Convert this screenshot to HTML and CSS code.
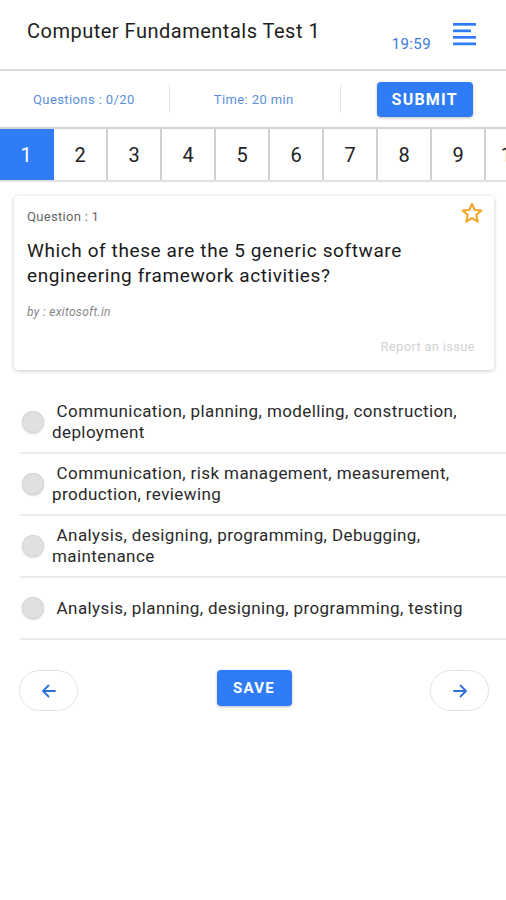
FILE: index.html
```html
<!DOCTYPE html>
<html lang="en">
<head>
    <meta charset="UTF-8">
    <meta name="viewport" content="width=device-width, initial-scale=1.0">
    <title>Computer Fundamentals Test 1</title>
    <link rel="stylesheet" href="styles.css">
</head>
<body>
    <!-- Header -->
    <div class="header">
        <h1>Computer Fundamentals Test 1</h1>
        <span class="clock">19:59</span>
        <svg class="menu" width="24" height="24" viewBox="0 0 24 24">
            <rect x="0" y="0" width="23" height="2.7" fill="#2f7cf6"/>
            <rect x="0" y="6.5" width="18" height="2.7" fill="#2f7cf6"/>
            <rect x="0" y="13" width="23" height="2.7" fill="#2f7cf6"/>
            <rect x="0" y="19.5" width="23" height="2.7" fill="#2f7cf6"/>
        </svg>
    </div>

    <!-- Info bar -->
    <div class="info">
        <span class="info-item">Questions : 0/20</span>
        <span class="sep"></span>
        <span class="info-item">Time: 20 min</span>
        <span class="sep"></span>
        <button class="btn submit">SUBMIT</button>
    </div>

    <!-- Question numbers -->
    <div class="numbers">
        <div class="num active">1</div>
        <div class="num">2</div>
        <div class="num">3</div>
        <div class="num">4</div>
        <div class="num">5</div>
        <div class="num">6</div>
        <div class="num">7</div>
        <div class="num">8</div>
        <div class="num">9</div>
        <div class="num">10</div>
    </div>

    <!-- Question card -->
    <div class="card">
        <svg class="star" width="24" height="24" viewBox="0 0 24 24">
            <path d="M12 2.8l2.7 6.2 6.7.6-5.1 4.4 1.5 6.6L12 17.1l-5.8 3.5 1.5-6.6-5.1-4.4 6.7-.6z" fill="none" stroke="#f5a623" stroke-width="2" stroke-linejoin="round"/>
        </svg>
        <div class="q-label">Question : 1</div>
        <div class="q-text">Which of these are the 5 generic software engineering framework activities?</div>
        <div class="q-by">by : exitosoft.in</div>
        <div class="report">Report an issue</div>
    </div>

    <!-- Options -->
    <div class="options">
        <label class="option"><span class="radio"></span><span class="opt-text">&nbsp;Communication, planning, modelling, construction, deployment</span></label>
        <label class="option"><span class="radio"></span><span class="opt-text">&nbsp;Communication, risk management, measurement, production, reviewing</span></label>
        <label class="option"><span class="radio"></span><span class="opt-text">&nbsp;Analysis, designing, programming, Debugging, maintenance</span></label>
        <label class="option"><span class="radio"></span><span class="opt-text">&nbsp;Analysis, planning, designing, programming, testing</span></label>
    </div>

    <!-- Navigation -->
    <div class="nav">
        <button class="arrow">
            <svg width="20" height="20" viewBox="0 0 20 20"><path d="M16 10H4M9.5 4.5L4 10l5.5 5.5" fill="none" stroke="#2f6fd6" stroke-width="1.8" stroke-linecap="round" stroke-linejoin="round"/></svg>
        </button>
        <button class="btn save">SAVE</button>
        <button class="arrow">
            <svg width="20" height="20" viewBox="0 0 20 20"><path d="M4 10h12M10.5 4.5L16 10l-5.5 5.5" fill="none" stroke="#2f6fd6" stroke-width="1.8" stroke-linecap="round" stroke-linejoin="round"/></svg>
        </button>
    </div>
</body>
</html>
```

FILE: styles.css
```css
body {
    font-family: Roboto, "Noto Sans", Arial, sans-serif;
    background: #fff;
    margin: 0;
    color: #222;
    overflow: hidden;
}
.header {
    height: 69px;
    display: flex;
    align-items: flex-start;
    padding: 0 29px 0 27px;
    border-bottom: 2px solid #dcdcdc;
}
.header h1 {
    font-size: 20px;
    font-weight: 400;
    letter-spacing: 0.5px;
    margin: 19px 0 0;
    flex: 1;
    color: #1e1e1e;
}
.clock {
    color: #3b7ad9;
    font-size: 15px;
    letter-spacing: 0.4px;
    margin-top: 35px;
    margin-right: 22px;
}
.menu {
    margin-top: 23px;
}
.info {
    height: 56px;
    display: flex;
    align-items: center;
    padding: 0 0 0 33px;
    border-bottom: 2px solid #d4d4d4;
}
.info > * {
    flex-shrink: 0;
    white-space: nowrap;
}
.info-item {
    color: #5b8fdc;
    font-size: 13px;
    letter-spacing: 0.4px;
}
.sep {
    width: 1px;
    height: 28px;
    background: #e2e2e2;
    margin: 0 44px 0 34px;
}
.info-item + .sep + .info-item + .sep {
    margin: 0 36px 0 46px;
}
.btn {
    background: #2f7cf6;
    color: white;
    border: none;
    border-radius: 4px;
    font-family: Roboto, Arial, sans-serif;
    font-weight: 700;
    letter-spacing: 1.2px;
    box-shadow: 0 1px 3px rgba(0,0,0,0.25);
    cursor: pointer;
}
.submit {
    width: 96px;
    height: 35px;
    font-size: 16px;
}
.numbers {
    display: flex;
    height: 51px;
    border-bottom: 2px solid #e0e0e0;
}
.num {
    flex: 0 0 52px;
    display: flex;
    align-items: center;
    justify-content: center;
    font-size: 20px;
    color: #222;
    border-right: 2px solid #d0d0d0;
}
.num.active {
    background: #2f7cf6;
    color: white;
    border-right-color: #2f7cf6;
}
.card {
    position: relative;
    margin: 14px 12px 0 14px;
    padding: 13px 13px 16px 13px;
    border-radius: 4px;
    box-shadow: 0 1px 4px rgba(0,0,0,0.22);
}
.star {
    position: absolute;
    top: 5px;
    right: 10px;
}
.q-label {
    font-size: 13px;
    letter-spacing: 0.3px;
    color: #666;
}
.q-text {
    font-size: 19px;
    letter-spacing: 0.6px;
    line-height: 25px;
    margin-top: 14px;
    color: #1a1a1a;
}
.q-by {
    font-size: 12px;
    letter-spacing: 0.3px;
    font-style: italic;
    color: #888;
    margin-top: 17px;
}
.report {
    text-align: right;
    font-size: 13px;
    letter-spacing: 0.3px;
    color: #d2d2d2;
    margin-top: 20px;
    padding-right: 6px;
}
.options {
    margin: 22px 0 0 20px;
}
.option {
    display: flex;
    align-items: center;
    min-height: 62px;
    border-bottom: 2px solid #ececec;
    box-sizing: border-box;
}
.radio {
    flex: 0 0 22px;
    height: 22px;
    border-radius: 50%;
    background: #e0e0e0;
    box-shadow: inset 0 0 0 1px #d6d6d6, 0 1px 2px rgba(0,0,0,0.15);
    margin: 0 8px 0 2px;
}
.opt-text {
    font-size: 17px;
    letter-spacing: 0.4px;
    line-height: 21px;
    color: #2a2a2a;
    padding: 9px 20px 9px 0;
}
.nav {
    display: flex;
    justify-content: space-between;
    align-items: flex-start;
    padding: 30px 17px 0 19px;
}
.arrow {
    width: 59px;
    height: 41px;
    border: 1px solid #dde3ee;
    border-radius: 21px;
    background: white;
    display: flex;
    align-items: center;
    justify-content: center;
    cursor: pointer;
}
.save {
    width: 75px;
    height: 36px;
    font-size: 15px;
}
```
